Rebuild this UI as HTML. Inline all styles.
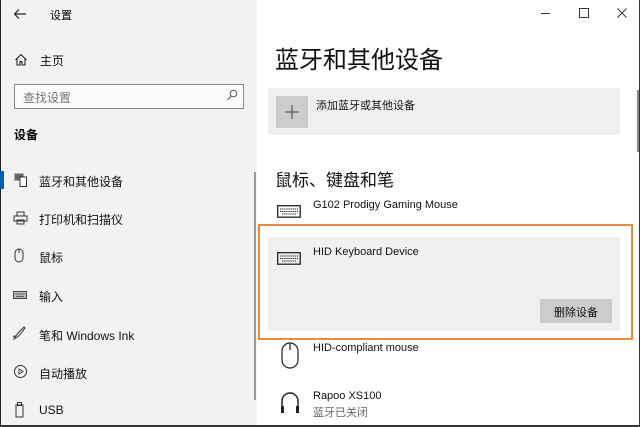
<!DOCTYPE html>
<html><head><meta charset="utf-8"><style>
*{margin:0;padding:0;box-sizing:border-box}
body{width:640px;height:427px;overflow:hidden;font-family:"Liberation Sans","Noto Sans CJK SC",sans-serif;color:#000;background:#fff;position:relative}
.a{position:absolute;white-space:nowrap}
#left{position:absolute;left:0;top:0;width:257px;height:427px;background:#f2f2f2}
.nav{font-size:12px;color:#111}
.t{font-size:11px;color:#111}
</style></head><body>
<div id="left"></div>
<div class="a" style="left:0;top:0;width:640px;height:427px;border:1px solid #333;border-top:none"></div>
<div class="a" style="left:0;top:0;width:1px;height:427px;background:#222"></div>
<div class="a" style="left:0;bottom:0;width:640px;height:2px;background:#333"></div>
<svg class="a" style="left:13px;top:8px" width="14" height="12"><path d="M13 6H2M6 1.5L1.5 6 6 10.5" stroke="#222" stroke-width="1.2" fill="none"/></svg>
<div class="a" style="left:50px;top:7px;font-size:11px">设置</div>
<svg class="a" style="left:14px;top:53px" width="14" height="13"><path d="M1.5 7L7 1.5 12.5 7M3 5.5V12H6V8.5H8V12H11V5.5" stroke="#222" stroke-width="1.1" fill="none"/></svg>
<div class="a nav" style="left:40px;top:52px">主页</div>
<div class="a" style="left:14px;top:84px;width:230px;height:25px;border:1px solid #888;background:#fafafa"></div>
<div class="a" style="left:23px;top:89px;font-size:12px;color:#777">查找设置</div>
<svg class="a" style="left:226px;top:89px" width="12" height="13"><circle cx="7.5" cy="4.5" r="3.3" stroke="#555" fill="none"/><path d="M5.2 7L1.5 11" stroke="#555"/></svg>
<div class="a" style="left:14px;top:126px;font-size:12px;font-weight:bold">设备</div>
<div class="a" style="left:0;top:171px;width:4px;height:18px;background:#0063b1"></div>
<div class="a" style="left:254px;top:172px;width:2px;height:228px;background:#999"></div>
<svg class="a" style="left:14px;top:173px" width="14" height="14"><rect x="0.5" y="0.5" width="9" height="7" fill="#666"/><rect x="6" y="4" width="6.5" height="9.5" fill="#fff" stroke="#333"/></svg>
<div class="a nav" style="left:39px;top:173px">蓝牙和其他设备</div>
<svg class="a" style="left:13px;top:211px" width="15" height="14"><rect x="4" y="1" width="7" height="4" fill="none" stroke="#333"/><rect x="1" y="5" width="13" height="5" fill="none" stroke="#333"/><rect x="4" y="9" width="7" height="4" fill="none" stroke="#333"/></svg>
<div class="a nav" style="left:39px;top:211px">打印机和扫描仪</div>
<svg class="a" style="left:14px;top:248px" width="10" height="15"><rect x="1" y="1" width="8" height="13" rx="4" fill="none" stroke="#333"/><path d="M5 1V5" stroke="#333"/></svg>
<div class="a nav" style="left:39px;top:249px">鼠标</div>
<svg class="a" style="left:13px;top:291px" width="14" height="8"><rect x="0.5" y="0.5" width="13" height="7" fill="#bbb" stroke="#444"/><path d="M2 3h10M3 5.5h8" stroke="#444" stroke-width="0.8"/></svg>
<div class="a nav" style="left:39px;top:288px">输入</div>
<svg class="a" style="left:12px;top:325px" width="15" height="16"><path d="M2 14C4 10 6 8 9 5L12 2 13 3 10 7C8 10 6 12 2 14ZM1 12C3 10 4 11 3 13" stroke="#333" fill="none"/></svg>
<div class="a nav" style="left:39px;top:327px">笔和 Windows Ink</div>
<svg class="a" style="left:13px;top:364px" width="15" height="15"><circle cx="7.5" cy="7.5" r="6" fill="none" stroke="#333"/><path d="M6 5L10 7.5 6 10Z" fill="none" stroke="#333" stroke-width="0.9"/></svg>
<div class="a nav" style="left:39px;top:365px">自动播放</div>
<svg class="a" style="left:15px;top:402px" width="9" height="16"><rect x="1" y="3" width="7" height="12" fill="none" stroke="#333"/><rect x="2.5" y="0.5" width="4" height="3" fill="none" stroke="#333"/></svg>
<div class="a nav" style="left:39px;top:403px">USB</div>
<div class="a" style="left:541px;top:13px;width:9px;height:1px;background:#333"></div>
<div class="a" style="left:579px;top:8px;width:10px;height:10px;border:1px solid #333"></div>
<svg class="a" style="left:617px;top:8px" width="10" height="10"><path d="M0.5 0.5L9.5 9.5M9.5 0.5L0.5 9.5" stroke="#333"/></svg>
<div class="a" style="left:275px;top:40px;font-size:24px;color:#111">蓝牙和其他设备</div>
<div class="a" style="left:268px;top:88px;width:352px;height:47px;background:#f0f0f0"></div>
<div class="a" style="left:276px;top:96px;width:32px;height:32px;background:#ccc"></div>
<svg class="a" style="left:284px;top:104px" width="16" height="16"><path d="M8 1V15M1 8H15" stroke="#444" stroke-width="1"/></svg>
<div class="a t" style="left:316px;top:97px">添加蓝牙或其他设备</div>
<div class="a" style="left:637px;top:90px;width:2px;height:62px;background:#888"></div>
<div class="a" style="left:275px;top:166px;font-size:17px;color:#111">鼠标、键盘和笔</div>
<svg class="a" style="left:277px;top:205px" width="24" height="13"><rect x="0.7" y="0.7" width="22.5" height="11.5" fill="none" stroke="#222" stroke-width="1.3"/><path d="M3 4h18M3 6.5h18M5 9h14" stroke="#222" stroke-dasharray="1.3 0.8" stroke-width="1"/></svg>
<div class="a t" style="left:313px;top:199px">G102 Prodigy Gaming Mouse</div>
<div class="a" style="left:258px;top:224px;width:375px;height:116px;border:2px solid #e98a3c"></div>
<div class="a" style="left:268px;top:237px;width:352px;height:94px;background:#f0f0f0"></div>
<svg class="a" style="left:277px;top:252px" width="24" height="13"><rect x="0.7" y="0.7" width="22.5" height="11.5" fill="none" stroke="#222" stroke-width="1.3"/><path d="M3 4h18M3 6.5h18M5 9h14" stroke="#222" stroke-dasharray="1.3 0.8" stroke-width="1"/></svg>
<div class="a t" style="left:313px;top:246px">HID Keyboard Device</div>
<div class="a" style="left:540px;top:299px;width:72px;height:24px;background:#ccc"></div>
<div class="a t" style="left:554px;top:304px">删除设备</div>
<svg class="a" style="left:281px;top:342px" width="18" height="27"><rect x="1" y="1" width="16" height="25" rx="8" fill="none" stroke="#222" stroke-width="1.2"/><path d="M9 1V8" stroke="#222" stroke-width="1.2"/></svg>
<div class="a t" style="left:313px;top:342px">HID-compliant mouse</div>
<svg class="a" style="left:279px;top:390px" width="22" height="25"><path d="M3 20V11A8 8 0 0 1 19 11V20" fill="none" stroke="#222" stroke-width="1.5"/><rect x="2" y="16" width="3" height="7" fill="#222"/><rect x="17" y="16" width="3" height="7" fill="#222"/></svg>
<div class="a t" style="left:313px;top:390px">Rapoo XS100</div>
<div class="a t" style="left:313px;top:404px;color:#666">蓝牙已关闭</div>
</body></html>
